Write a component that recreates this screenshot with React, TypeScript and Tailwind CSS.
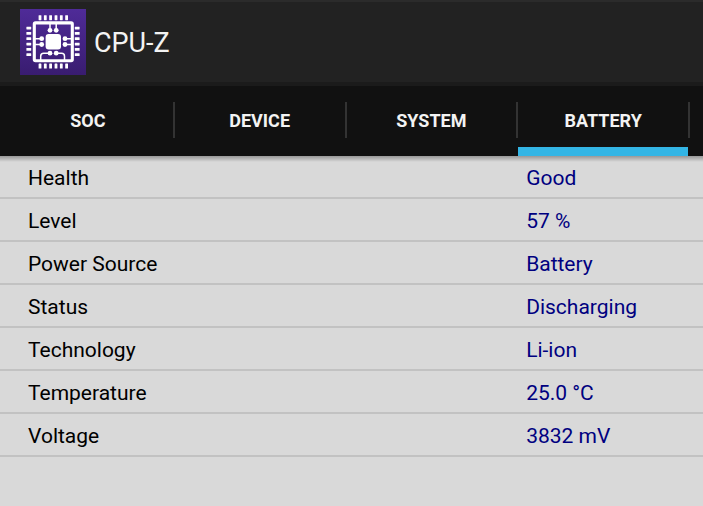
import { useState } from "react";
import clsx from "clsx";

const TABS = ["SOC", "DEVICE", "SYSTEM", "BATTERY"];

const BATTERY_INFO = [
	{ label: "Health", value: "Good" },
	{ label: "Level", value: "57 %" },
	{ label: "Power Source", value: "Battery" },
	{ label: "Status", value: "Discharging" },
	{ label: "Technology", value: "Li-ion" },
	{ label: "Temperature", value: "25.0 °C" },
	{ label: "Voltage", value: "3832 mV" },
];

const PINS = [20, 25.3, 30.6, 36, 41.3, 46.6];

function AppIcon() {
	return (
		<svg viewBox="0 0 66 66" className="size-[66px] shrink-0" aria-hidden="true">
			<defs>
				<linearGradient id="icon-bg" x1="0" y1="0" x2="0" y2="1">
					<stop offset="0" stopColor="#4f2b98" />
					<stop offset="1" stopColor="#391c70" />
				</linearGradient>
			</defs>
			<rect width="66" height="66" fill="url(#icon-bg)" />
			{/* Pins on all four sides */}
			<g fill="#fff">
				{PINS.map((p) => (
					<g key={p}>
						<rect x={p - 1.4} y="6.2" width="2.8" height="5" rx="0.4" />
						<rect x={p - 1.4} y="54.6" width="2.8" height="5" rx="0.4" />
						<rect x="6.4" y={p - 2.3} width="4.8" height="2.8" rx="0.4" />
						<rect x="54.8" y={p - 2.3} width="4.8" height="2.8" rx="0.4" />
					</g>
				))}
			</g>
			<rect x="14.3" y="13.9" width="38" height="37.8" rx="1.2" fill="none" stroke="#fff" strokeWidth="3.1" />
			<rect x="25.6" y="25" width="15.4" height="15.4" rx="3" fill="#fff" />
			{/* Traces */}
			<g fill="none" stroke="#fff" strokeWidth="1.5">
				<path d="M30 14v7M36.2 14v7M14 29.7h7.5M14 35.5h7.5M45 29.7h7M45 35.5h7" />
				<path d="M30 44.2h-6.3q-3 0-3 3v4M36.2 44.2h5.3q3 0 3 3v4" />
			</g>
			<g fill="#fff">
				<circle cx="30" cy="21.3" r="2.4" />
				<circle cx="36.2" cy="21.3" r="2.4" />
				<circle cx="21.7" cy="29.7" r="2.4" />
				<circle cx="21.7" cy="35.5" r="2.4" />
				<circle cx="45" cy="29.7" r="2.4" />
				<circle cx="45" cy="35.5" r="2.4" />
				<circle cx="30" cy="44.2" r="2.4" />
				<circle cx="36.2" cy="44.2" r="2.4" />
			</g>
		</svg>
	);
}

export default function App() {
	const [active, setActive] = useState("BATTERY");

	return (
		<div className="flex min-h-screen flex-col bg-[#d9d9d9] font-['Roboto',sans-serif]">
			<header className="flex items-center gap-2 border-t-2 border-b-4 border-t-[#2b2b2b] border-b-[#1b1b1b] bg-[#222222] px-5 pt-[7px] pb-[7px]">
				<AppIcon />
				<h1 className="pt-0.5 text-[27px] leading-8 text-[#f3f3f3]">CPU-Z</h1>
			</header>

			<div role="tablist" className="flex h-[70px] bg-[#111111] pr-[13px] pl-[3px]">
				{TABS.map((tab) => (
					<button
						key={tab}
						type="button"
						role="tab"
						aria-selected={tab === active}
						onClick={() => setActive(tab)}
						className="flex flex-1 cursor-pointer items-center text-lg font-bold text-[#f3f3f3]"
					>
						<span
							className={clsx(
								"flex h-full flex-1 items-center justify-center border-y-9 border-t-transparent",
								tab === active ? "border-b-[#33b5e5]" : "border-b-transparent",
							)}
						>
							{tab}
						</span>
						<span className="mb-0.5 h-9 w-0.5 bg-[#333333]" />
					</button>
				))}
			</div>

			<main className="flex-1">
				{/* Shadow cast by the tab strip */}
				<div className="relative">
					<div className="absolute inset-x-0 top-0 h-1.5 bg-linear-to-b from-black/30 to-transparent" />
				</div>
				<table className="w-full table-fixed border-collapse text-[21px] leading-[37px]">
					<tbody>
						{BATTERY_INFO.map(({ label, value }) => (
							<tr key={label} className="border-b-2 border-[#c2c2c2]">
								<th scope="row" className="w-[71%] pt-1 pl-7 text-left font-normal text-black">
									{label}
								</th>
								<td className="pt-1 pl-[27px] text-[#000080]">{value}</td>
							</tr>
						))}
					</tbody>
				</table>
			</main>
		</div>
	);
}
